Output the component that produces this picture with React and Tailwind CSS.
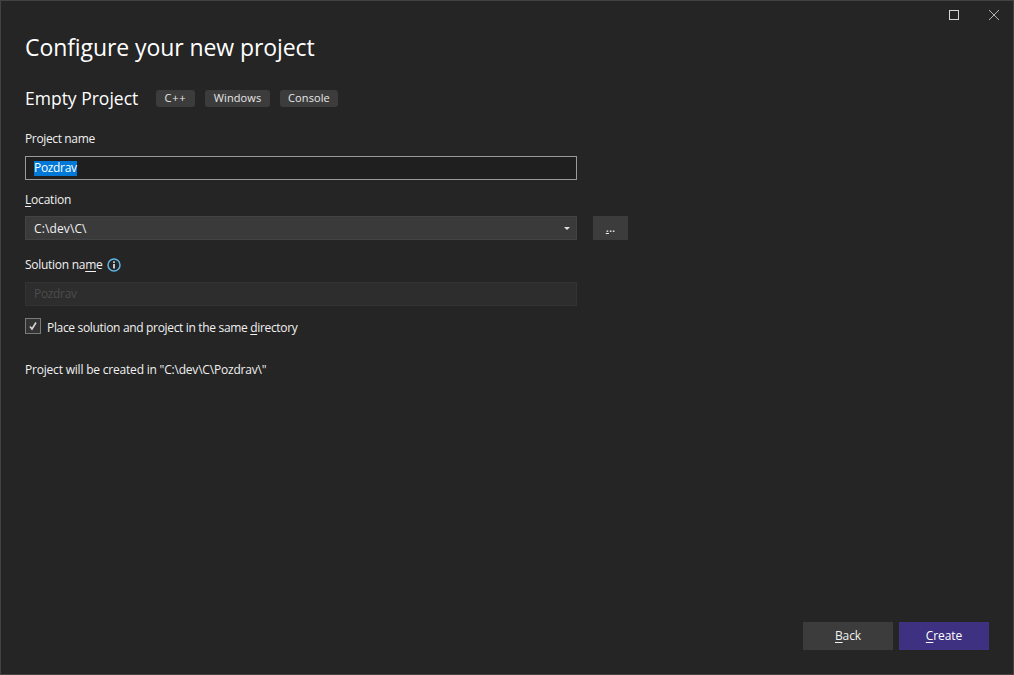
export default function App() {
  return (
    <div className="w-[1014px] h-[675px] box-border border border-[#434343] bg-[#252525] text-[#f1f1f1] flex flex-col overflow-hidden font-['Open_Sans','Noto_Sans',sans-serif] text-[12px] leading-[16px]">
      <div className="flex justify-end h-[28px] pr-[14px] pt-[9px] gap-[30px] shrink-0">
        <svg width="10" height="10" viewBox="0 0 10 10" fill="none" stroke="#d6d6d6" strokeWidth="1"><rect x="0.5" y="0.5" width="9" height="9" /></svg>
        <svg width="10" height="10" viewBox="0 0 10 10" fill="none" stroke="#b4b4b4" strokeWidth="1"><path d="M0 0L10 10M10 0L0 10" /></svg>
      </div>
      <div className="pl-[24px] flex flex-col flex-1">
        <h1 className="text-[23px] leading-[36px] h-[36px] tracking-[-0.08px] text-white">Configure your new project</h1>
        <div className="flex items-center mt-[21px] h-[24px]">
          <span className="text-[17.5px] tracking-[0px] text-white w-[131px] shrink-0 leading-[24px]">Empty Project</span>
          <div className="flex gap-[10px] text-[11px] tracking-[0.1px] text-[#e8e8e8]">
            <span className="w-[39px] h-[17px] flex items-center justify-center rounded-[3px] bg-[#3c3c3c] tracking-[0.8px]">C++</span>
            <span className="w-[65px] h-[17px] flex items-center justify-center rounded-[3px] bg-[#3c3c3c]">Windows</span>
            <span className="w-[58px] h-[17px] flex items-center justify-center rounded-[3px] bg-[#3c3c3c]">Console</span>
          </div>
        </div>
        <div className="mt-[19px] h-[20px] leading-[20px] tracking-[-0.36px] text-[#f1f1f1]">Project name</div>
        <div className="mt-[7px] w-[552px] h-[24px] box-border border border-[#9a9a9a] bg-[#1f1f1f] flex items-center pl-[8px]">
          <span className="bg-[#0078d7] text-white h-[15px] leading-[14px] tracking-[-0.33px]">Pozdrav</span>
        </div>
        <div className="mt-[10px] h-[20px] leading-[20px] tracking-[-0.2px]"><span className="underline underline-offset-2">L</span>ocation</div>
        <div className="flex mt-[6px] gap-[16px]">
          <div className="w-[552px] h-[24px] box-border border border-[#434343] bg-[#3a3a3a] flex items-center justify-between pl-[8px] pr-[6px]">
            <span className="tracking-[0.12px] pt-[2px]">C:\dev\C\</span>
            <svg width="6" height="3" viewBox="0 0 6 3" fill="#e0e0e0"><path d="M0 0H6L3 3Z" /></svg>
          </div>
          <div className="w-[35px] h-[24px] bg-[#3c3c3c] flex items-center justify-center text-[12px] leading-[12px]">
            <span><span className="underline">.</span>..</span>
          </div>
        </div>
        <div className="flex items-center mt-[15px] h-[20px] tracking-[-0.28px]">
          <span>Solution na<span className="underline underline-offset-2">m</span>e</span>
          <svg className="ml-[5px]" width="14" height="14" viewBox="0 0 14 14" fill="none"><circle cx="7" cy="7" r="6" stroke="#5fb6e6" strokeWidth="1.5" /><rect x="6.2" y="6" width="1.6" height="4.5" fill="#e6f4fb" /><rect x="6.2" y="3.3" width="1.6" height="1.6" fill="#e6f4fb" /></svg>
        </div>
        <div className="mt-[7px] w-[552px] h-[24px] box-border border border-[#333333] bg-[#2d2d2d] flex items-center pl-[8px] text-[#4c4c4c] tracking-[-0.33px]">Pozdrav</div>
        <div className="flex items-center mt-[12px] h-[16px]">
          <div className="w-[16px] h-[16px] box-border border border-[#7a7a7a] bg-[#333333] flex items-center justify-center">
            <svg width="10" height="10" viewBox="0 0 10 10" fill="none" stroke="#d4d4d4" strokeWidth="1.6"><path d="M2 5.5L4 8L8 1.5" /></svg>
          </div>
          <span className="ml-[6px] tracking-[-0.33px] pt-[4px] leading-[16px]">Place solution and project in the same <span className="underline underline-offset-2">d</span>irectory</span>
        </div>
        <div className="mt-[28px] h-[16px] tracking-[-0.2px]">Project will be created in "C:\dev\C\Pozdrav\"</div>
        <div className="flex-1" />
        <div className="flex justify-end gap-[6px] pr-[24px] pb-[24px]">
          <button className="w-[90px] h-[28px] bg-[#3c3c3c] text-[#f1f1f1] tracking-[-0.1px]"><span className="underline underline-offset-2">B</span>ack</button>
          <button className="w-[90px] h-[28px] bg-[#3f3181] text-white tracking-[-0.1px]"><span className="underline underline-offset-2">C</span>reate</button>
        </div>
      </div>
    </div>
  );
}
